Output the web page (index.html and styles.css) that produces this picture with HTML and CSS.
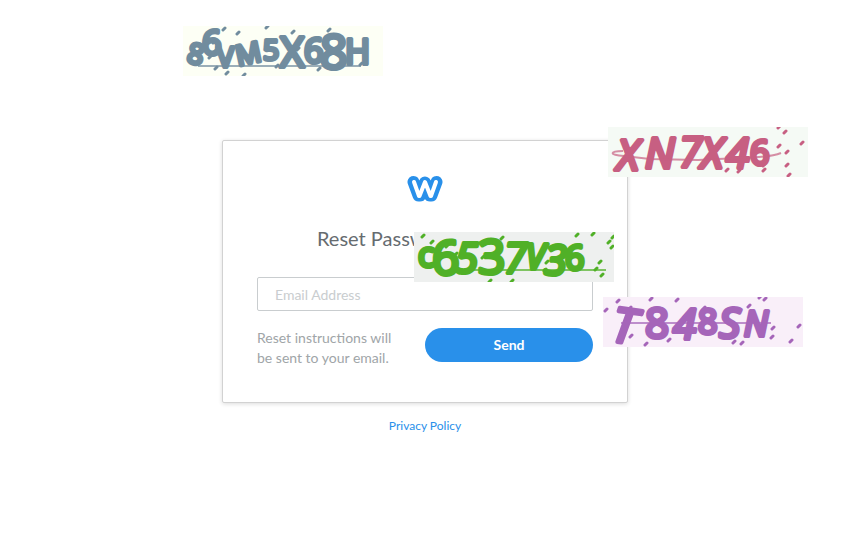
FILE: index.html
```html
<!DOCTYPE html>
<html lang="en">
<head>
<meta charset="utf-8">
<title>Reset Password</title>
<link rel="stylesheet" href="styles.css">
</head>
<body>
<main class="page">
  <section class="card">
    <svg class="logo" viewBox="0 0 36 28" role="img" aria-label="Logo">
      <path class="logo-outer" d="M6.500 7 11.500 20.500H13L18 7.500 23 20.500H24.500L29.500 7"/>
      <path class="logo-inner" d="M7 7 12 21H12.500L18 7 23.500 21H24L29 7"/>
    </svg>
    <h1 class="title">Reset Password by Email</h1>
    <form class="form">
      <input class="email" type="email" aria-label="Email Address" placeholder="Email Address">
      <div class="actions">
        <p class="hint">Reset instructions will be sent to your email.</p>
        <button class="send" type="button">Send</button>
      </div>
    </form>
  </section>
  <a class="privacy" href="#">Privacy Policy</a>
</main>

<svg class="captcha captcha-slate" viewBox="0 0 200 50">
  <g class="glyphs">
    <text class="s" transform="translate(3 36) rotate(12)">8</text>
    <text class="m" transform="translate(19 29)">6</text>
    <text class="s" transform="translate(34 41)">V</text>
    <text class="s" transform="translate(55 40) rotate(-12)">M</text>
    <text class="s" transform="translate(80 34)">5</text>
    <text class="l" transform="translate(97 41)">X</text>
    <text class="m" transform="translate(121 37)">6</text>
    <text class="xl" transform="translate(137 43)">8</text>
    <text class="m" transform="translate(162 38)">H</text>
  </g>
  <path class="line" d="M15 40H178"/>
  <path class="dots" d="M40 4l2-2M54 8l2-2M83 2l2-2M30 17l2-2M30 27l2-2M26 32l2-2M32 43l2-2M43 48l2-2M60 50l2-2M93 41l2-2M109 7l2-2M116 14l2-2M114 24l2-2M135 44l2-2M145 5l2-2M158 16l2-2M154 39l2-2M177 39l2-2"/>
</svg>

<svg class="captcha captcha-rose" viewBox="0 0 200 50">
  <g class="glyphs">
    <text class="l lean" transform="translate(9 43)">X</text>
    <text class="l lean" transform="translate(37 41)">N</text>
    <text class="l lean" transform="translate(71 40)">7</text>
    <text class="l lean" transform="translate(93 41)">X</text>
    <text class="l lean" transform="translate(118 41)">4</text>
    <text class="m" transform="translate(142 38)">6</text>
  </g>
  <path class="line" d="M15 24C2 24 0 28 16 29L42 32 90 33 151 30Q166 29 173 26"/>
  <path class="dots" d="M170 1l2-2M176 6l2-2M193 17l2-2M170 20l2-2M178 26l2-2M178 39l2-2M180 49l2-2M155 39l2-2M155 44l2-2M118 44l2-2M130 45l2-2"/>
</svg>

<svg class="captcha captcha-green" viewBox="0 0 200 50">
  <g class="glyphs">
    <text class="m" transform="translate(4 35)">c</text>
    <text class="xl" transform="translate(18 43)">6</text>
    <text class="l lean" transform="translate(41 41)">5</text>
    <text class="xl" transform="translate(64 42)">3</text>
    <text class="l lean" transform="translate(90 41)">7</text>
    <text class="m lean" transform="translate(112 37)">V</text>
    <text class="l lean" transform="translate(130 43)">3</text>
    <text class="m" transform="translate(151 38)">6</text>
  </g>
  <path class="line" d="M40 38H192"/>
  <path class="dots" d="M8 5l2-2M17 11l2-2M32 15l2-2M41 23l2-2M59 33l2-2M68 26l2-2M87 7l2-2M75 50l2-2M97 50l2-2M132 31l2-2M130 39l2-2M162 4l2-2M178 3l2-2M198 6l2-2M194 11l2-2M197 16l2-2M185 31l2-2M181 38l2-2M187 44l2-2"/>
</svg>

<svg class="captcha captcha-violet" viewBox="0 0 200 50">
  <g class="glyphs">
    <text class="xl lean" transform="translate(7 44) rotate(8)">T</text>
    <text class="l" transform="translate(42 41)">8</text>
    <text class="l lean" transform="translate(70 42)">4</text>
    <text class="m" transform="translate(95 37)">8</text>
    <text class="l lean" transform="translate(116 41)">S</text>
    <text class="m lean" transform="translate(141 39)">N</text>
  </g>
  <path class="line" d="M18 26H168"/>
  <path class="dots" d="M2 14l2-2M14 5l2-2M26 12l2-2M47 3l2-2M73 4l2-2M27 40l2-2M42 48l2-2M65 44l2-2M100 12l2-2M81 20l2-2M130 46l2-2M138 47l2-2M145 10l2-2M156 1l2-2M161 3l2-2M169 32l2-2M168 41l2-2M187 45l2-2M195 30l2-2"/>
</svg>
</body>
</html>
```
FILE: styles.css
```css
* {
  box-sizing: border-box;
}

body {
  margin: 0;
  background: #fff;
  font-family: Lato, "Open Sans", sans-serif;
}

.page {
  display: flex;
  flex-direction: column;
  align-items: center;
  padding: 140px 16px 40px;
}

.card {
  display: flex;
  flex-direction: column;
  align-items: center;
  width: 100%;
  max-width: 406px;
  padding: 34px;
  border: 1px solid #d2d2d2;
  border-radius: 2px;
  background: #fff;
  box-shadow: 0 1px 4px rgba(0, 0, 0, 0.14);
}

.logo {
  width: 36px;
  height: 28px;
}

.logo path {
  fill: none;
  stroke-linecap: round;
  stroke-linejoin: round;
}

.logo .logo-outer {
  stroke: #2990ea;
  stroke-width: 12;
}

.logo .logo-inner {
  stroke: #fff;
  stroke-width: 4;
}

.title {
  margin: 23px 0 26px;
  color: #666c70;
  font-size: 20px;
  font-weight: 400;
  line-height: 25px;
  white-space: nowrap;
}

.form {
  width: 100%;
}

.email {
  display: block;
  width: 100%;
  height: 34px;
  padding: 0 17px;
  border: 1px solid #c9cdcf;
  border-radius: 2px;
  background: #fff;
  color: #666c70;
  font: 14px/20px Lato, "Open Sans", sans-serif;
}

.email::placeholder {
  color: #c9cdcf;
  opacity: 1;
}

.actions {
  display: grid;
  grid-template-columns: 1fr 1fr;
  align-items: start;
  margin-top: 17px;
}

.hint {
  margin: 0;
  padding-right: 24px;
  color: #a0a5a8;
  font-size: 14px;
  line-height: 20px;
}

.send {
  height: 34px;
  border: 0;
  border-radius: 17px;
  background: #2990ea;
  color: #fff;
  font: 700 14px/20px Lato, "Open Sans", sans-serif;
}

.privacy {
  margin-top: 14px;
  color: #2990ea;
  font-size: 12px;
  line-height: 18px;
  text-decoration: none;
}

.captcha {
  position: absolute;
  width: 200px;
  height: 50px;
  overflow: hidden;
  color: var(--ink);
  background: var(--paper);
}

.captcha-slate {
  --ink: #718c9e;
  --paper: #fdfff5;
  left: 183px;
  top: 26px;
}

.captcha-rose {
  --ink: #c75f82;
  --paper: #f5faf5;
  left: 608px;
  top: 127px;
}

.captcha-green {
  --ink: #50b027;
  --paper: #eef0ef;
  left: 414px;
  top: 232px;
}

.captcha-violet {
  --ink: #a565b9;
  --paper: #f9eff9;
  left: 603px;
  top: 297px;
}

.glyphs {
  fill: currentColor;
  stroke: currentColor;
  stroke-width: 4;
  stroke-linejoin: round;
  font-family: "Open Sans", sans-serif;
}

.glyphs .s {
  font-size: 28px;
}

.glyphs .m {
  font-size: 34px;
}

.glyphs .l {
  font-size: 42px;
}

.glyphs .xl {
  font-size: 48px;
}

.glyphs .lean {
  font-style: italic;
}

.line {
  fill: none;
  stroke: currentColor;
  stroke-width: 2;
  opacity: 0.7;
}

.dots {
  fill: none;
  stroke: currentColor;
  stroke-width: 3;
  stroke-linecap: round;
}
```
